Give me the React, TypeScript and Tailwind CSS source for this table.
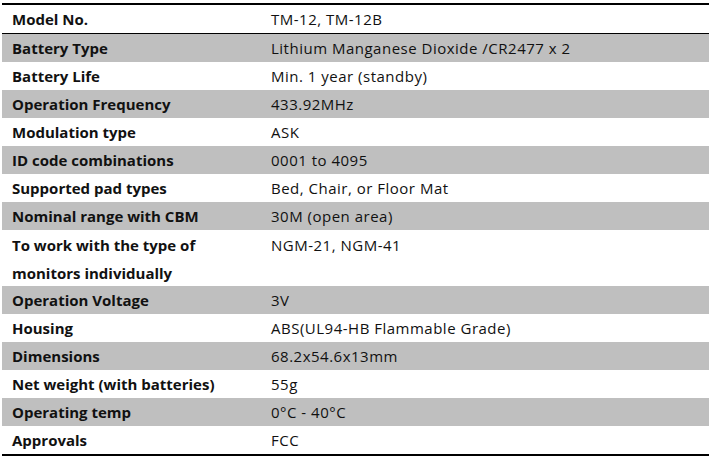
import React from "react";

const rows: { label: React.ReactNode; value: string; tall?: boolean }[] = [
  { label: "Battery Type", value: "Lithium Manganese Dioxide /CR2477 x 2" },
  { label: "Battery Life", value: "Min. 1 year (standby)" },
  { label: "Operation Frequency", value: "433.92MHz" },
  { label: "Modulation type", value: "ASK" },
  { label: "ID code combinations", value: "0001 to 4095" },
  { label: "Supported pad types", value: "Bed, Chair, or Floor Mat" },
  { label: "Nominal range with CBM", value: "30M (open area)" },
  {
    label: (
      <>
        To work with the type of
        <br />
        monitors individually
      </>
    ),
    value: "NGM-21, NGM-41",
    tall: true,
  },
  { label: "Operation Voltage", value: "3V" },
  { label: "Housing", value: "ABS(UL94-HB Flammable Grade)" },
  { label: "Dimensions", value: "68.2x54.6x13mm" },
  { label: "Net weight (with batteries)", value: "55g" },
  { label: "Operating temp", value: "0°C - 40°C" },
  { label: "Approvals", value: "FCC" },
];

export default function App() {
  return (
    <div className="w-[710px] h-[459px] bg-white pt-[3px] pl-[2px] pr-[1px]" style={{ fontFamily: "'Open Sans', 'Liberation Sans', sans-serif" }}>
      <div className="border-t-2 border-b-2 border-black text-[15px] text-[#111]">
        <div className="flex h-[29px] items-center border-b border-black">
          <div className="w-[269px] shrink-0 pl-[10px] font-bold">Model No.</div>
          <div className="tracking-[0.5px]">TM-12, TM-12B</div>
        </div>
        {rows.map((r, i) => (
          <div
            key={i}
            className={`flex ${r.tall ? "h-[56px] items-start pt-[1px] leading-[28px]" : "h-[28px] items-center"} ${i % 2 === 0 ? "bg-[#bfbfbf]" : "bg-white"}`}
          >
            <div className="w-[269px] shrink-0 pl-[10px] font-bold">{r.label}</div>
            <div className="tracking-[0.5px]">{r.value}</div>
          </div>
        ))}
      </div>
    </div>
  );
}
